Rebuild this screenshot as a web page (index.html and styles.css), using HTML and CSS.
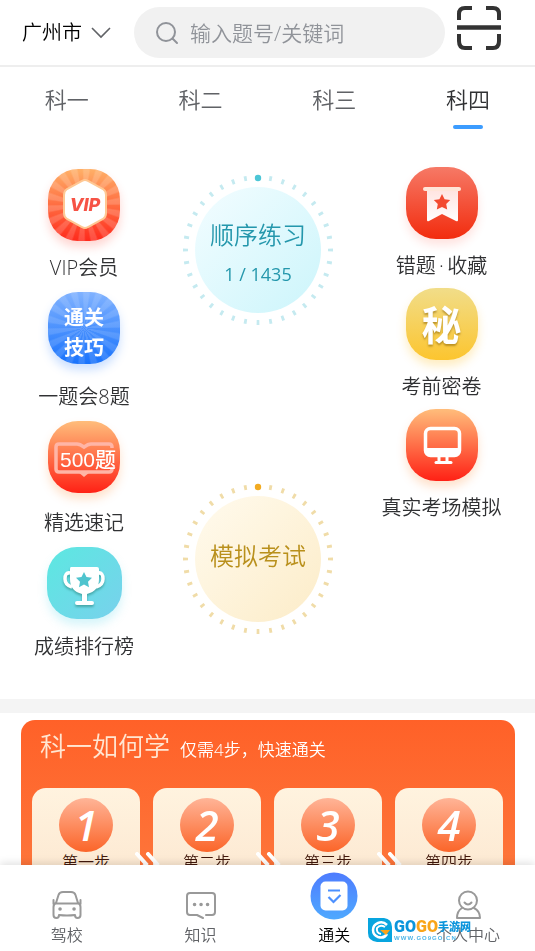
FILE: index.html
```html
<!DOCTYPE html>
<html lang="zh-CN">
<head>
    <meta charset="UTF-8">
    <meta name="viewport" content="width=device-width, initial-scale=1.0">
    <title>通关</title>
    <link rel="stylesheet" href="styles.css">
</head>
<body>
    <div class="app">
        <header class="header">
            <button class="city">
                广州市
                <svg width="20" height="12" viewBox="0 0 20 12" fill="none" stroke="#606266" stroke-width="1.6"><path d="M1 1l9 9 9-9"/></svg>
            </button>
            <div class="search">
                <svg width="24" height="24" viewBox="0 0 24 24" fill="none" stroke="#909399" stroke-width="2" stroke-linecap="round"><circle cx="11" cy="11" r="9"/><path d="M17.500 17.500l4.500 4.500"/></svg>
                <input type="text" class="search-input" placeholder="输入题号/关键词" aria-label="搜索">
            </div>
            <button class="scan" aria-label="扫一扫">
                <svg width="46" height="46" viewBox="0 0 46 46" fill="none" stroke="#333" stroke-width="4"><path d="M3 15V9q0-6 6-6h7M30 3h7q6 0 6 6v6M3 29v7q0 7 6 7h7M30 43h7q6 0 6-7v-7"/><path d="M1 22.500h44" stroke-width="4.500"/></svg>
            </button>
        </header>

        <nav class="tabs">
            <a href="#" class="tab">科一</a>
            <a href="#" class="tab">科二</a>
            <a href="#" class="tab">科三</a>
            <a href="#" class="tab active">科四</a>
        </nav>

        <main class="content">
            <section class="menu">
                <div class="menu-side left">
                    <a href="#" class="item">
                        <span class="icon icon-vip">
                            <svg width="72" height="72" viewBox="0 0 72 72"><path d="M34 12q3-2 6 0l15 8q3 2 3 6v18q0 4-3 6l-15 8q-3 2-6 0l-15-8q-3-2-3-6V26q0-4 3-6z" fill="#fff" stroke="#ffc894" stroke-width="2"/><text x="37" y="42" class="vip-text">VIP</text></svg>
                        </span>
                        <span class="label">VIP会员</span>
                    </a>
                    <a href="#" class="item item-skill">
                        <span class="icon icon-skill">通关<br>技巧</span>
                        <span class="label">一题会8题</span>
                    </a>
                    <a href="#" class="item item-fast">
                        <span class="icon icon-orange">
                            <svg width="72" height="72" viewBox="0 0 72 72"><path d="M64 27v-1q0-3-3-3H43q-3 0-7 3-4-3-7-3H11q-3 0-3 3v22q0 3 3 3h50q3 0 3-3" fill="none" stroke="#ffb5a6" stroke-width="3.500"/><path d="M30 51h12l-6 5z" fill="#ffb5a6"/><text x="40" y="46" class="fast-text">500题</text></svg>
                        </span>
                        <span class="label">精选速记</span>
                    </a>
                    <a href="#" class="item item-rank">
                        <span class="icon icon-rank">
                            <svg width="74" height="72" viewBox="0 0 74 72"><g class="drop"><path d="M24 20h26q2 0 2 2v10q0 12-12 15v7h5q2 0 2 2t-2 2H30q-2 0-2-2t2-2h5v-7q-12-3-12-15V22q0-2 1-2z" fill="#fff"/><path d="M23 26q-5-1-5 6 0 6 7 8M51 26q5-1 5 6 0 6-7 8" fill="none" stroke="#fff" stroke-width="3.500"/></g><path d="M37 25l2.500 5 5.500.8-4 3.900 1 5.500-5-2.600-5 2.600 1-5.500-4-3.900 5.500-.8z" fill="#4fc4ce"/></svg>
                        </span>
                        <span class="label">成绩排行榜</span>
                    </a>
                </div>

                <div class="menu-center">
                    <button class="dial dial-blue">
                        <svg class="dial-ring" width="164" height="164" viewBox="0 0 164 164">
                            <defs><linearGradient id="blue" x1="0" y1="0" x2="1" y2="1"><stop offset="0.100" stop-color="#effcff"/><stop offset="1" stop-color="#ccf5fb"/></linearGradient></defs>
                            <circle cx="82" cy="82" r="63" fill="url(#blue)"/>
                            <circle cx="82" cy="82" r="72.500" fill="none" stroke="#c5eaf0" stroke-width="5" pathLength="360" stroke-dasharray="2.200 7.800" stroke-dashoffset="1.100"/>
                            <circle cx="82" cy="10" r="5" fill="#fff"/>
                            <circle cx="82" cy="10" r="3.200" fill="#4cc6d6"/>
                        </svg>
                        <span class="dial-title">顺序练习</span>
                        <span class="dial-count">1 / 1435</span>
                    </button>
                    <button class="dial dial-gold">
                        <svg class="dial-ring" width="164" height="164" viewBox="0 0 164 164">
                            <defs><linearGradient id="gold" x1="0" y1="0" x2="1" y2="1"><stop offset="0.100" stop-color="#fff9ea"/><stop offset="1" stop-color="#fcecc8"/></linearGradient></defs>
                            <circle cx="82" cy="82" r="63" fill="url(#gold)"/>
                            <circle cx="82" cy="82" r="72.500" fill="none" stroke="#f0dca8" stroke-width="5" pathLength="360" stroke-dasharray="2.200 7.800" stroke-dashoffset="1.100"/>
                            <circle cx="82" cy="10" r="5" fill="#fff"/>
                            <circle cx="82" cy="10" r="3.200" fill="#f2ab22"/>
                        </svg>
                        <span class="dial-title">模拟考试</span>
                    </button>
                </div>

                <div class="menu-side right">
                    <a href="#" class="item">
                        <span class="icon icon-red">
                            <svg width="72" height="72" viewBox="0 0 72 72"><defs><linearGradient id="flag" x1="0" y1="0" x2="0" y2="1"><stop offset="0" stop-color="#ffe3df"/><stop offset="1" stop-color="#fff"/></linearGradient></defs><path d="M21 22h31v31q0 2-2 1l-14-7-13 7q-2 1-2-1z" fill="url(#flag)"/><rect x="17" y="20" width="38" height="4" rx="2" fill="#ffe5d8"/><path d="M36 27l2.600 5.200 5.600.8-4 4 1 5.600-5.200-2.700-5.200 2.700 1-5.600-4-4 5.600-.8z" fill="#f34a30"/></svg>
                        </span>
                        <span class="label">错题&thinsp;·&thinsp;收藏</span>
                    </a>
                    <a href="#" class="item">
                        <span class="icon icon-secret">秘</span>
                        <span class="label">考前密卷</span>
                    </a>
                    <a href="#" class="item">
                        <span class="icon icon-orange">
                            <svg width="72" height="72" viewBox="0 0 72 72" fill="none" stroke="#fff"><rect x="19.500" y="19.500" width="34" height="27" rx="5" stroke-width="3.500"/><path d="M20 39h33v3q0 5-5 5H25q-5 0-5-5z" fill="#fff" stroke="none"/><path d="M33 47v6M41 47v6" stroke-width="3"/><path d="M30 53.500h15" stroke-width="3" stroke-linecap="round"/></svg>
                        </span>
                        <span class="label">真实考场模拟</span>
                    </a>
                </div>
            </section>

            <section class="guide">
                <div class="guide-card">
                    <div class="guide-head">
                        <h2>科一如何学</h2>
                        <p>仅需4步，快速通关</p>
                    </div>
                    <div class="steps">
                        <div class="step">
                            <span class="step-num">1</span>
                            <span class="step-name">第一步</span>
                            <svg class="step-next" width="26" height="24" viewBox="0 0 26 24"><path d="M3 2l9 10-9 10M14 2l9 10-9 10"/></svg>
                        </div>
                        <div class="step">
                            <span class="step-num">2</span>
                            <span class="step-name">第二步</span>
                            <svg class="step-next" width="26" height="24" viewBox="0 0 26 24"><path d="M3 2l9 10-9 10M14 2l9 10-9 10"/></svg>
                        </div>
                        <div class="step">
                            <span class="step-num">3</span>
                            <span class="step-name">第三步</span>
                            <svg class="step-next" width="26" height="24" viewBox="0 0 26 24"><path d="M3 2l9 10-9 10M14 2l9 10-9 10"/></svg>
                        </div>
                        <div class="step">
                            <span class="step-num">4</span>
                            <span class="step-name">第四步</span>
                        </div>
                    </div>
                </div>
            </section>
        </main>

        <nav class="tabbar">
            <a href="#" class="tabbar-item">
                <svg width="30" height="30" viewBox="0 0 30 30" fill="none" stroke="#999" stroke-width="2" stroke-linecap="round" stroke-linejoin="round"><path d="M4 13l2.500-8Q7.500 2 11 2h8q3.500 0 4.500 3l2.500 8M1.500 10v4M28.500 10v4M4 13.500h22M4 13q-2.500 1-2.500 4v8q0 3 3 3 2.500 0 2.500-3 8 1 16 0 0 3 2.500 3 3 0 3-3v-8q0-3-2.500-4"/><path d="M8 19h.1M22 19h.1" stroke-width="3.500"/></svg>
                <span>驾校</span>
            </a>
            <a href="#" class="tabbar-item">
                <svg width="30" height="30" viewBox="0 0 30 30" fill="none" stroke="#999" stroke-width="2" stroke-linecap="round" stroke-linejoin="round"><path d="M20 25h6q3 0 3-3V6q0-3-3-3H4Q1 3 1 6v16q0 3 3 3h7l6 3"/><path d="M8.500 14.500h.1M15 14.500h.1M21.500 14.500h.1" stroke-width="3.500"/></svg>
                <span>知识</span>
            </a>
            <a href="#" class="tabbar-item active">
                <svg width="48" height="48" viewBox="0 0 48 48" fill="none"><defs><linearGradient id="pass" x1="0" y1="0" x2="0" y2="1"><stop offset="0" stop-color="#4e7cfe"/><stop offset="1" stop-color="#4fa9ff"/></linearGradient></defs><circle cx="24" cy="24" r="23.500" fill="url(#pass)"/><rect x="10.500" y="9.500" width="27" height="29" rx="5" fill="#fff"/><path d="M18 18.500h12M18.500 25l5 5 7-7" stroke="#4d91ff" stroke-width="2.200"/></svg>
                <span>通关</span>
            </a>
            <a href="#" class="tabbar-item">
                <svg width="30" height="30" viewBox="0 0 30 30" fill="none" stroke="#999" stroke-width="2" stroke-linecap="round" stroke-linejoin="round"><circle cx="15" cy="10.500" r="9"/><path d="M11.500 12.500q3.500 4 7 0M9 18q-5 3-5 10h23q0-7-6-10"/></svg>
                <span>个人中心</span>
            </a>
            <div class="mark">
                <svg width="24" height="24" viewBox="0 0 24 24" fill="none"><path d="M0 0h16q8 1 8 9v15H9q-9-1-9-9z" fill="#08a5df"/><path d="M19 7Q15 3 10 5q-5 2-5 7t5 7q6 2 9-3" stroke="#fff" stroke-width="2.500"/><path d="M17 9q-5-3-8 1-1 5 4 6" stroke="#fff" stroke-width="2"/><path d="M12 12h10l-4 5z" fill="#f9a51a"/></svg>
                <div class="mark-text">
                    <div class="mark-name"><b>GO</b><b class="mark-gold">GO</b><span>手游网</span></div>
                    <div class="mark-url">WWW.GO9GO.CN</div>
                </div>
            </div>
        </nav>
    </div>
</body>
</html>
```

FILE: styles.css
```css
* {
    box-sizing: border-box;
}

body {
    margin: 0;
    font-family: "Open Sans", "Noto Sans CJK SC", sans-serif;
    font-weight: 350;
    color: #303133;
    background-color: #fff;
}

a {
    color: inherit;
    text-decoration: none;
}

button {
    padding: 0;
    border: none;
    background: none;
    font: inherit;
    color: inherit;
    cursor: pointer;
}

svg {
    display: block;
    flex-shrink: 0;
}

.app {
    display: flex;
    flex-direction: column;
    height: 100vh;
}

/* header */
.header {
    display: flex;
    align-items: center;
    padding: 7px 33px 7px 22px;
    border-bottom: 2px solid #eee;
}

.city {
    display: flex;
    align-items: center;
    gap: 9px;
    margin-right: 23px;
    font-size: 20px;
    line-height: 30px;
    color: #000;
    white-space: nowrap;
}

.search {
    display: flex;
    align-items: center;
    flex: 1;
    gap: 11px;
    min-width: 0;
    height: 51px;
    padding: 0 21px;
    border-radius: 26px;
    background-color: #f1f1f1;
}

.search-input {
    flex: 1;
    min-width: 0;
    padding: 0;
    border: none;
    outline: none;
    background: none;
    font: inherit;
    font-size: 21px;
}

.search-input::placeholder {
    color: #909399;
}

.scan {
    align-self: flex-start;
    margin: -2px 0 0 11px;
}

/* tabs */
.tabs {
    display: flex;
    padding: 16px 0 10px;
}

.tab {
    display: flex;
    flex: 1;
    flex-direction: column;
    align-items: center;
    gap: 10px;
    font-size: 22px;
    line-height: 32px;
    color: #606266;
}

.tab::after {
    content: "";
    width: 30px;
    height: 4px;
    border-radius: 2px;
}

.tab.active {
    color: #303133;
}

.tab.active::after {
    background-color: #3c9cff;
}

/* practice menu */
.content {
    flex: 1;
    min-height: 0;
    overflow-y: auto;
    scrollbar-width: none;
}

.menu {
    display: grid;
    grid-template-columns: 168fr 180fr 187fr;
    padding: 28px 0 39px;
}

.menu-side {
    display: flex;
    flex-direction: column;
    gap: 9px;
}

.left {
    gap: 11px;
    padding-top: 2px;
}

.item {
    display: flex;
    flex-direction: column;
    align-items: center;
    gap: 14px;
}

.item-skill {
    gap: 20px;
}

.item-fast {
    gap: 17px;
}

.item-rank {
    gap: 15px;
}

.label {
    font-size: 20px;
    line-height: 26px;
    white-space: nowrap;
}

.icon {
    display: flex;
    align-items: center;
    justify-content: center;
    width: 72px;
    height: 72px;
    border-radius: 30px;
    color: #fff;
}

.icon-vip {
    background: repeating-conic-gradient(rgba(255, 255, 255, 0.16) 0 8deg, transparent 11deg 17deg, rgba(255, 255, 255, 0.16) 20deg), linear-gradient(#ffb067, #ff2a1c);
    box-shadow: 0 6px 10px rgba(255, 70, 50, 0.22);
}

.vip-text {
    font: italic 800 18px "Inter", sans-serif;
    fill: #f65346;
    text-anchor: middle;
}

.icon-skill {
    background: repeating-conic-gradient(rgba(255, 255, 255, 0.12) 0 8deg, transparent 11deg 17deg, rgba(255, 255, 255, 0.12) 20deg), linear-gradient(#80b2ff, #1872fc);
    box-shadow: 0 6px 10px rgba(50, 130, 255, 0.25);
    padding-top: 10px;
    font-size: 20px;
    font-weight: 700;
    line-height: 30px;
}

.icon-orange {
    background: linear-gradient(#ffbd7b, #ff2115);
    box-shadow: 0 6px 10px rgba(255, 140, 50, 0.25);
}

.fast-text {
    font: 500 21px "Liberation Sans", "Noto Sans CJK SC", sans-serif;
    fill: #fff;
    text-anchor: middle;
}

.icon-rank {
    width: 75px;
    background: linear-gradient(135deg, #5ce8e1, #78d1ec);
    box-shadow: 0 6px 10px rgba(90, 215, 235, 0.25);
}

.drop {
    filter: drop-shadow(0 2px 1px rgba(30, 120, 110, 0.5));
}

.icon-red {
    background: linear-gradient(#f67966, #f22c0e);
    box-shadow: 0 6px 10px rgba(255, 70, 50, 0.15);
}

.icon-secret {
    background: linear-gradient(#f1dd89, #fcc52f);
    box-shadow: 0 6px 10px rgba(255, 195, 50, 0.3);
    padding-top: 2px;
    font-size: 40px;
    font-weight: 700;
    line-height: 70px;
    text-shadow: 0 2px 2px rgba(130, 90, 0, 0.5);
}

.menu-center {
    display: flex;
    flex-direction: column;
    align-items: center;
    gap: 145px;
    padding-top: 1px;
}

.dial {
    display: grid;
    align-content: center;
    justify-items: center;
    row-gap: 9px;
    position: relative;
    width: 164px;
    height: 164px;
}

.dial-ring {
    position: absolute;
    inset: 0;
    z-index: -1;
}

.dial-blue {
    padding-top: 8px;
    color: #2497ac;
}

.dial-gold {
    padding-bottom: 6px;
    color: #b9901c;
}

.dial-title {
    font-size: 24px;
    line-height: 30px;
}

.dial-count {
    font-size: 18px;
    font-weight: 400;
    line-height: 30px;
}

/* how to study */
.guide {
    padding: 7px 20px 30px 21px;
    border-top: 14px solid #f4f4f4;
}

.guide-card {
    padding: 7px 12px 20px 11px;
    border-radius: 14px;
    background: linear-gradient(#ff6128, #fd8145);
}

.guide-head {
    display: flex;
    align-items: baseline;
    gap: 10px;
    padding-left: 8px;
    margin-bottom: 23px;
}

.guide-head h2 {
    margin: 0;
    font-size: 26px;
    font-weight: 350;
    line-height: 38px;
    color: #ffe6d2;
}

.guide-head p {
    margin: 0;
    font-size: 17px;
    line-height: 24px;
    color: #fff;
}

.steps {
    display: grid;
    grid-template-columns: repeat(4, 1fr);
    gap: 13px;
}

.step {
    display: flex;
    flex-direction: column;
    align-items: center;
    position: relative;
    height: 150px;
    padding-top: 10px;
    border-radius: 14px;
    background: linear-gradient(#fff3df, #fbe1c8);
}

.step-num {
    width: 54px;
    height: 54px;
    border-radius: 50%;
    background: linear-gradient(#ffb497, #fb6529);
    font: italic 600 42px/54px "Open Sans", sans-serif;
    color: #fff;
    text-align: center;
}

.step-name {
    font-size: 16px;
    line-height: 20px;
    color: #41180b;
}

.step-next {
    position: absolute;
    top: 64px;
    right: -20px;
    z-index: 1;
    fill: none;
    stroke: #fff;
    stroke-width: 4;
    stroke-linecap: round;
}

/* bottom bar */
.tabbar {
    display: flex;
    position: relative;
    z-index: 2;
    height: 86px;
    background-color: #fff;
    box-shadow: 0 -2px 8px rgba(0, 0, 0, 0.12);
}

.tabbar-item {
    display: flex;
    flex: 1;
    flex-direction: column;
    align-items: center;
    justify-content: flex-end;
    gap: 4px;
    padding-bottom: 5px;
    font-size: 16px;
    line-height: 22px;
    color: #606266;
}

.tabbar-item.active {
    color: #000;
}

/* site mark over the bar */
.mark {
    display: flex;
    align-items: center;
    gap: 2px;
    position: absolute;
    right: 64px;
    bottom: 9px;
    pointer-events: none;
}

.mark-name {
    display: flex;
    font: 900 16px/17px "Roboto", sans-serif;
    color: #0b95dc;
}

.mark-gold {
    color: #f9a51a;
}

.mark-name span {
    font: 900 11px/17px "Noto Sans CJK SC", sans-serif;
}

.mark-url {
    font: 700 6px/7px "Liberation Sans", sans-serif;
    letter-spacing: 1px;
    color: #4db5e8;
}
```
